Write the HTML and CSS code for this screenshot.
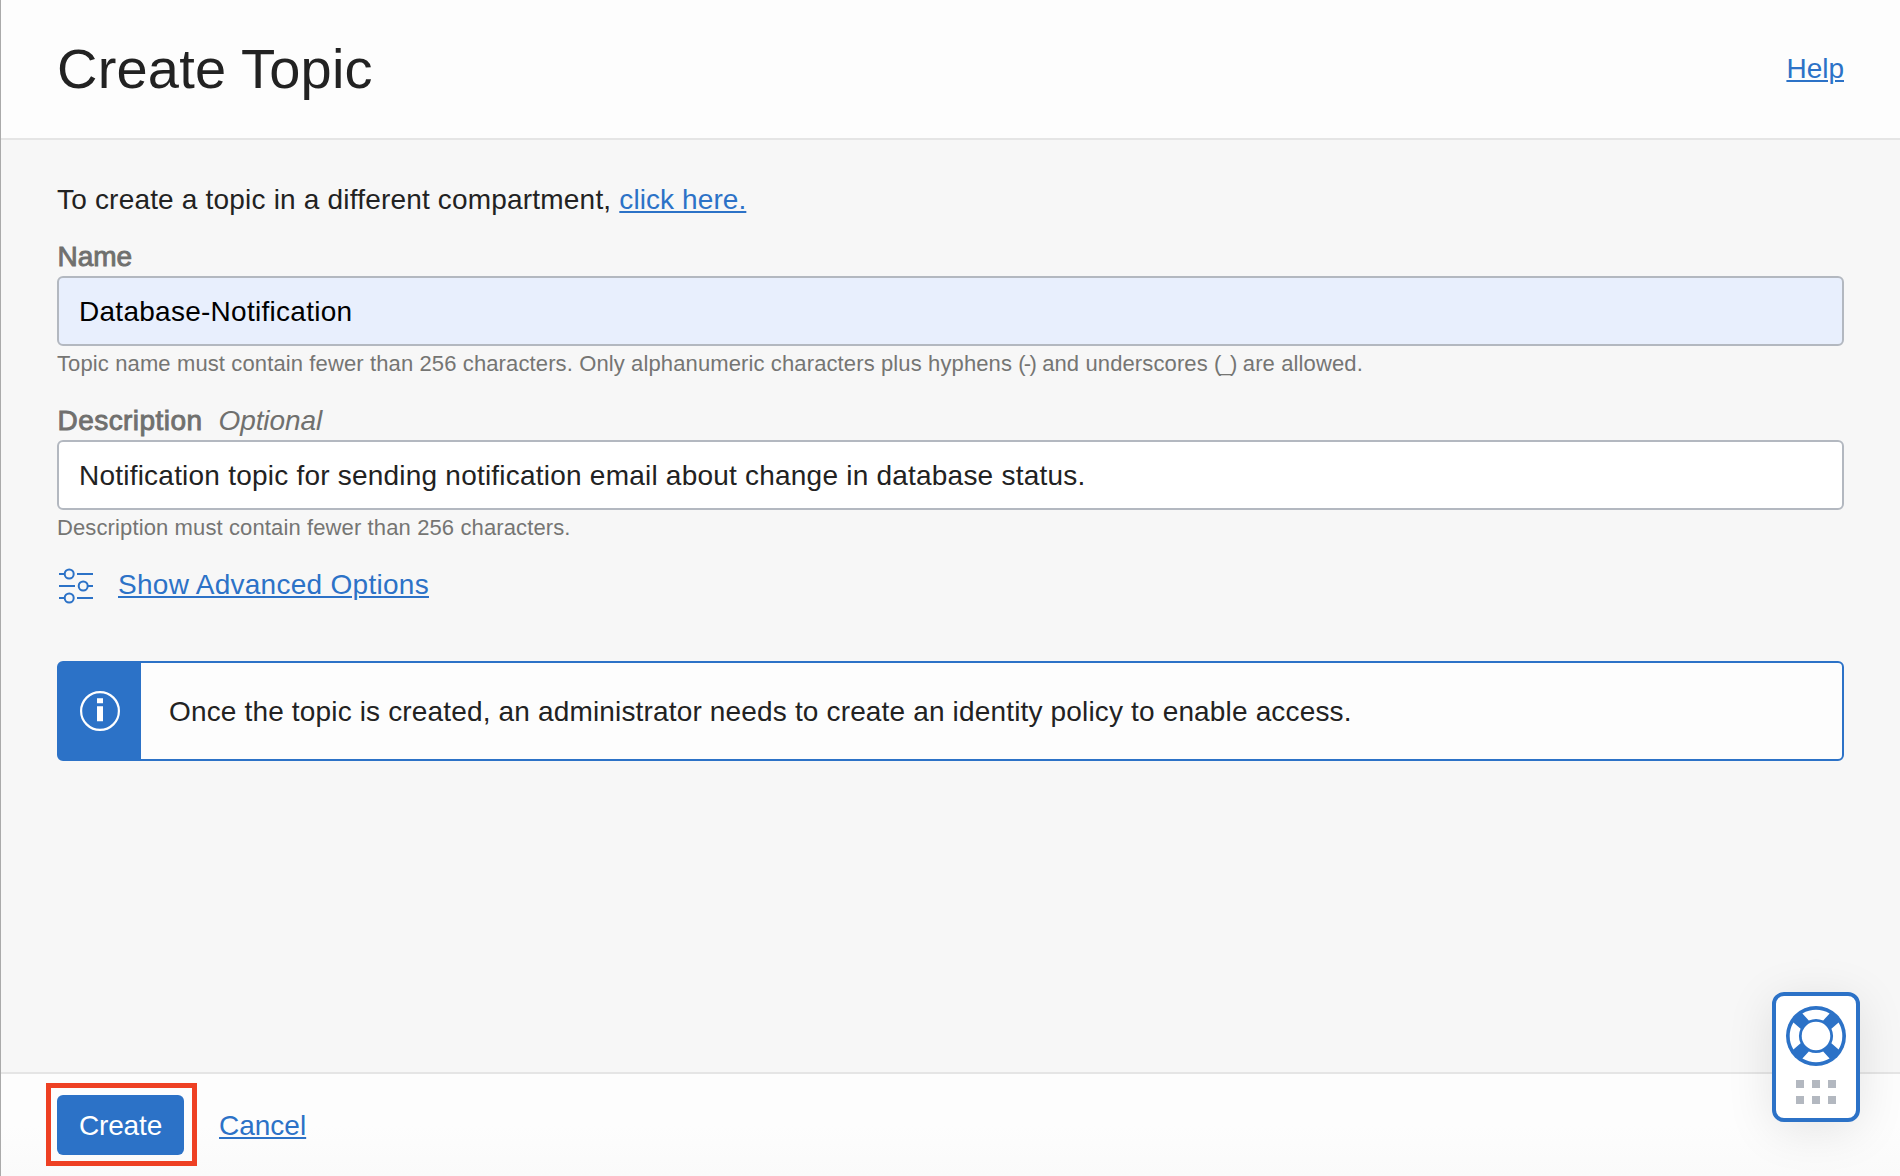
FILE: index.html
```html
<!DOCTYPE html>
<html lang="en">
<head>
<meta charset="utf-8">
<title>Create Topic</title>
<link rel="stylesheet" href="styles.css">
</head>
<body>
<div class="panel">
  <header class="header">
    <h1 class="title">Create Topic</h1>
    <a class="link" href="#">Help</a>
  </header>
  <main class="content">
    <p class="intro">To create a topic in a different compartment, <a class="link switch" href="#">click here.</a></p>
    <div class="field">
      <div class="label"><span class="label-name">Name</span></div>
      <div class="input autofill">Database-Notification</div>
      <div class="hint">Topic name must contain fewer than 256 characters. Only alphanumeric characters plus hyphens <span class="symbol">(-)</span> and underscores <span class="symbol">(_)</span> are allowed.</div>
    </div>
    <div class="field">
      <div class="label"><span class="label-description">Description</span><em class="optional">Optional</em></div>
      <div class="input">Notification topic for sending notification email about change in database status.</div>
      <div class="hint">Description must contain fewer than 256 characters.</div>
    </div>
    <div class="advanced">
      <svg class="sliders" viewBox="0 0 36 36" width="36" height="36" fill="none" stroke="currentColor" stroke-width="2">
        <path d="M1 6h5M19 6h16M1 18h16M30 18h5M1 30h5M19 30h16"/>
        <circle cx="11.2" cy="6" r="4.5"/><circle cx="25.2" cy="18" r="4.5"/><circle cx="11.2" cy="30" r="4.5"/>
      </svg>
      <a class="link toggle" href="#">Show Advanced Options</a>
    </div>
    <div class="notice">
      <div class="notice-icon">
        <svg viewBox="0 0 40 40" width="40" height="40">
          <circle cx="20" cy="20" r="18.9" fill="none" stroke="#fff" stroke-width="2.2"/>
          <path d="M17 7.3h6v5h-6zM17 15.2h6V30.2h-6z" fill="#fff"/>
        </svg>
      </div>
      <div class="notice-text">Once the topic is created, an administrator needs to create an identity policy to enable access.</div>
    </div>
  </main>
  <footer class="footer">
    <div class="highlight"><button class="create">Create</button></div>
    <a class="link cancel" href="#">Cancel</a>
  </footer>
</div>
<div class="support">
  <svg class="lifebuoy" viewBox="0 0 60 60" width="60" height="60">
    <circle cx="30" cy="30" r="30" fill="#2c72c7"/>
    <g fill="#fff">
      <path d="M16.4 7.4A26.8 26.8 0 0 1 43.6 7.4L37.2 14.6A17 17 0 0 0 22.8 14.6Z"/>
      <path d="M16.4 7.4A26.8 26.8 0 0 1 43.6 7.4L37.2 14.6A17 17 0 0 0 22.8 14.6Z" transform="rotate(90 30 30)"/>
      <path d="M16.4 7.4A26.8 26.8 0 0 1 43.6 7.4L37.2 14.6A17 17 0 0 0 22.8 14.6Z" transform="rotate(180 30 30)"/>
      <path d="M16.4 7.4A26.8 26.8 0 0 1 43.6 7.4L37.2 14.6A17 17 0 0 0 22.8 14.6Z" transform="rotate(270 30 30)"/>
      <circle cx="30" cy="30" r="14.3"/>
    </g>
  </svg>
  <div class="grip"><i></i><i></i><i></i><i></i><i></i><i></i></div>
</div>
</body>
</html>
```
FILE: styles.css
```css
* { box-sizing: border-box; }

body {
  margin: 0;
  background: #f7f7f7;
  color: #222;
  font-family: "Liberation Sans", "Helvetica Neue", Arial, sans-serif;
  font-size: 28px;
  line-height: 34px;
}

.panel {
  height: 1176px;
  display: flex;
  flex-direction: column;
  border-left: 1px solid #aaa;
}

.header {
  flex: none;
  height: 140px;
  display: flex;
  align-items: center;
  justify-content: space-between;
  padding: 0 56px;
  background: #fdfdfd;
  border-bottom: 2px solid #e5e5e5;
}

.title {
  margin: 0;
  font-size: 56px;
  line-height: 64px;
  font-weight: 400;
  letter-spacing: 0.2px;
}

.link {
  color: #2c72c7;
  text-decoration: underline;
  text-decoration-thickness: 2px;
  text-underline-offset: 2px;
}

.content { flex: 1; padding: 43px 56px 0; }
.intro { margin: 0; height: 57px; letter-spacing: 0.19px; }
.switch { letter-spacing: 0.09px; }

.field { height: 164px; }
.label { height: 36px; color: #70706e; }
.label-name, .label-description { -webkit-text-stroke: 0.9px #70706e; }
.label-name { padding-left: 0.5px; }
.label-description { padding-left: 0.5px; letter-spacing: 0.45px; }
.optional { margin-left: 16px; letter-spacing: -0.1px; }

.input {
  height: 70px;
  padding: 17px 20px 0;
  border: 2px solid #b3b8c0;
  border-radius: 6px;
  background: #fff;
  letter-spacing: 0.22px;
}
.autofill { background: #e8effd; color: #000; letter-spacing: 0.27px; }

.hint { font-size: 22px; line-height: 36px; color: #757573; letter-spacing: 0.12px; }
.symbol { letter-spacing: -1.8px; margin-right: 1px; }

.advanced {
  display: flex;
  height: 36px;
  gap: 24px;
  padding-left: 1px;
  color: #2c72c7;
}
.toggle { letter-spacing: 0.28px; }

.notice {
  display: flex;
  height: 100px;
  margin-top: 57px;
  border: 2px solid #2c72c7;
  border-radius: 6px;
  background: #fdfdfd;
}
.notice-icon {
  width: 82px;
  background: #2c72c7;
  display: flex;
  align-items: center;
  justify-content: center;
}
.notice-text { padding: 32px 28px; letter-spacing: 0.16px; }

.footer {
  flex: none;
  height: 104px;
  display: flex;
  align-items: flex-start;
  gap: 22px;
  padding: 9px 0 0 45px;
  border-top: 2px solid #e5e5e5;
  background: linear-gradient(#fdfdfd 50%, #fafafa);
}
.highlight { border: 5px solid #ee4023; padding: 7px 8px 6px 6px; }
.create {
  display: block;
  width: 127px;
  height: 60px;
  padding: 2px 0 0;
  border: 0;
  border-radius: 6px;
  background: #2c72c7;
  color: #fff;
  font: inherit;
  letter-spacing: -0.15px;
}
.cancel { margin-top: 26px; }

.support {
  position: absolute;
  left: 1772px;
  top: 992px;
  width: 88px;
  height: 130px;
  padding: 10px;
  border: 4px solid #2c72c7;
  border-radius: 12px;
  background: #fff;
  box-shadow: 0 8px 48px rgba(0, 0, 0, 0.1);
}
.lifebuoy { display: block; }
.grip {
  display: grid;
  grid-template-columns: repeat(3, 8px);
  gap: 8px;
  margin: 14px 0 0 10px;
}
.grip i { height: 8px; background: #b3b8c0; }
```
